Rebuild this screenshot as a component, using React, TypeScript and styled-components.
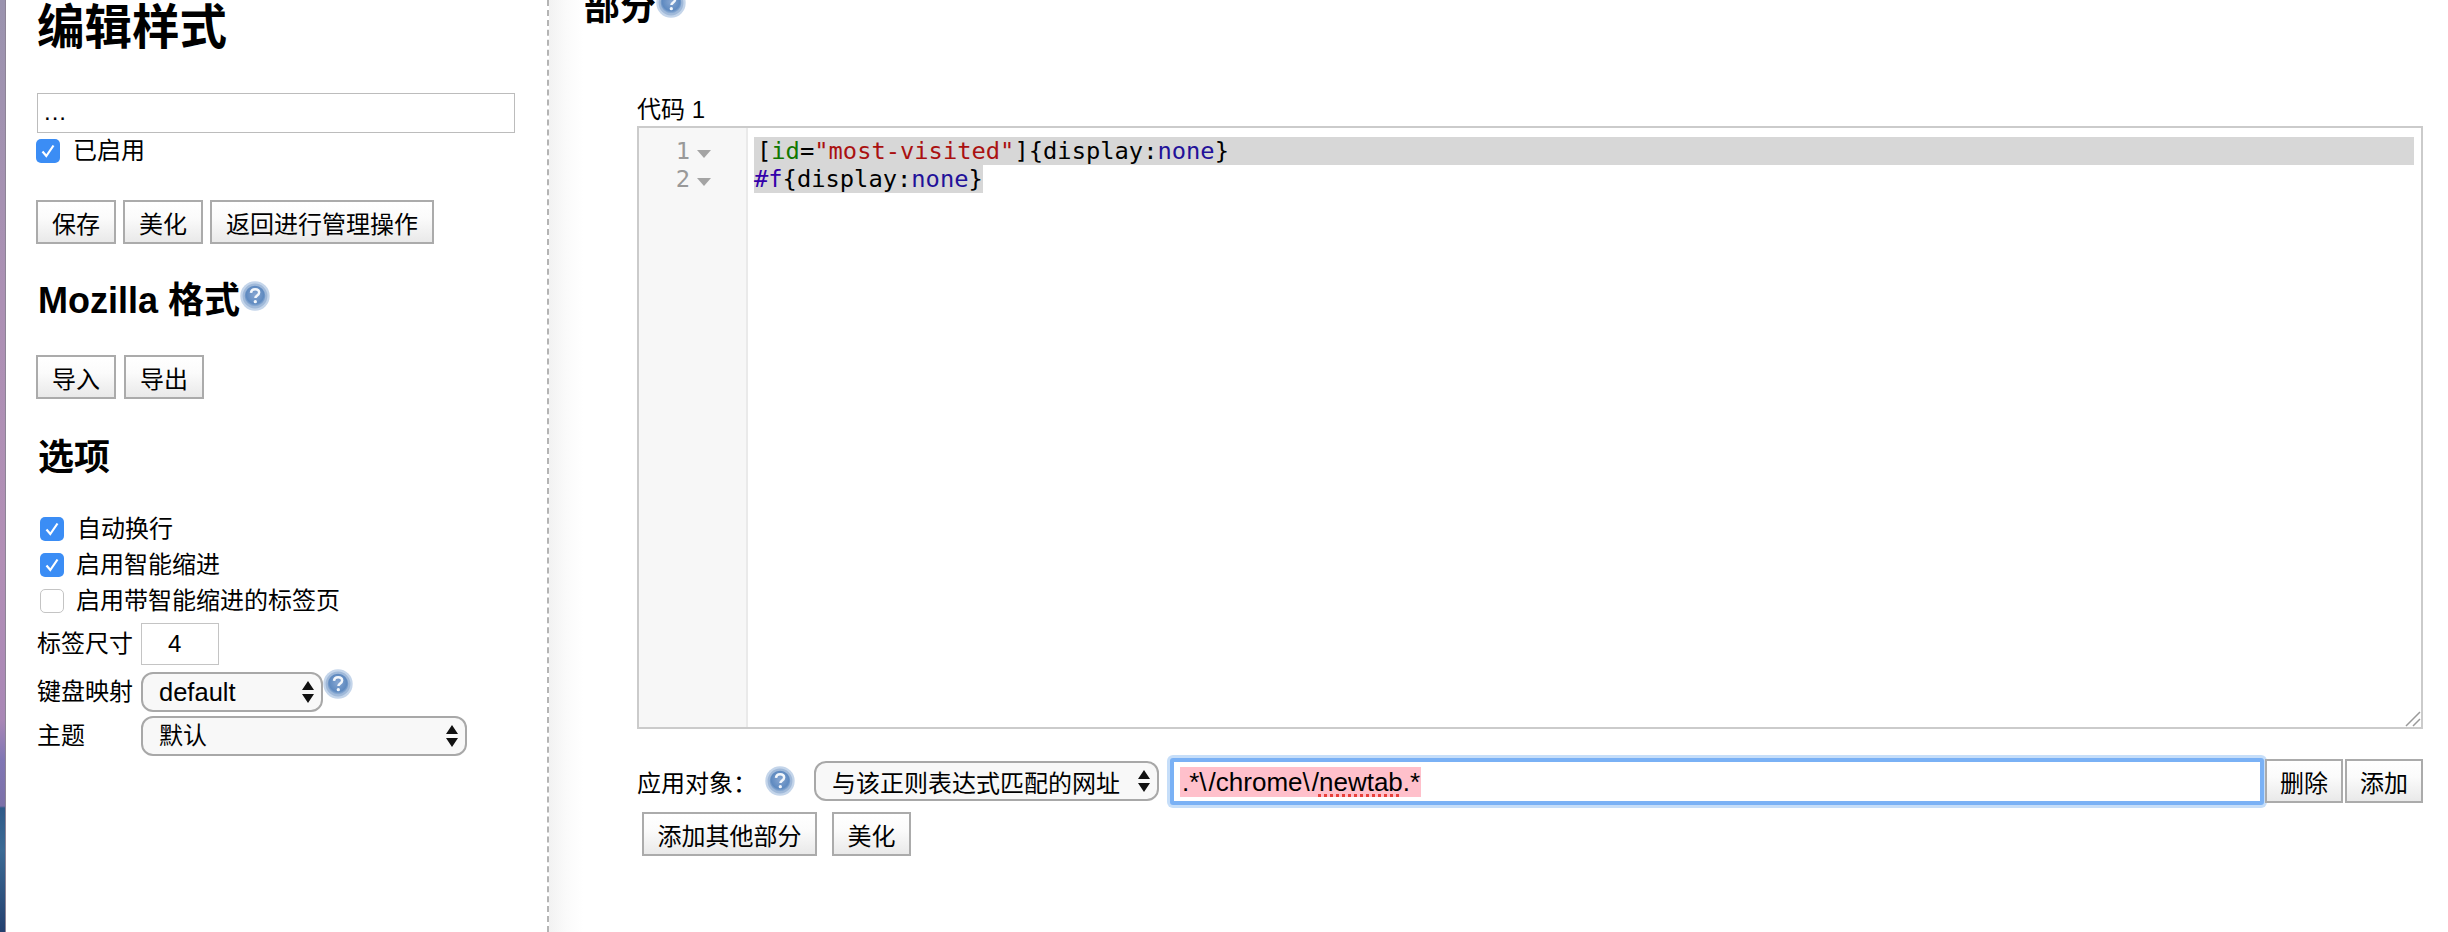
import * as React from "react";
import styled, { createGlobalStyle } from "styled-components";

const SANS = `"Liberation Sans", "Noto Sans CJK SC", sans-serif`;
const MONO = `"DejaVu Sans Mono", "Liberation Mono", monospace`;

const Global = createGlobalStyle`
    html, body {
        margin: 0;
        padding: 0;
        height: 932px;
        overflow: hidden;
        background: #fff;
    }
    body {
        font-family: ${SANS};
        font-size: 24px;
        color: #000;
    }
`;

const Page = styled.div`
    display: flex;
    width: 2448px;
    height: 932px;
    overflow: hidden;
`;

/* the desktop wallpaper showing through on the left edge */
const Wallpaper = styled.div`
    flex: none;
    width: 5px;
    border-right: 1px solid #8d8496;
    background:
        linear-gradient(180deg, #9a93ae 0, #ac90b4 300px, #b28fb6 560px, #a987b6 720px, #8076b4 760px, #7c70a8 806px, #2f5a88 808px, #3b6a94 850px, #24406f 932px);
`;

const Sidebar = styled.aside`
    flex: none;
    box-sizing: border-box;
    width: 543px;
    height: 932px;
    padding: 0 0 0 30px;
    border-right: 2px dashed #b4b4b4;
    display: flex;
    flex-direction: column;
    align-items: flex-start;
`;

const Main = styled.main`
    flex: 1;
    min-width: 0;
    box-sizing: border-box;
    padding: 0 25px 0 35px;
    background: linear-gradient(90deg, #f2f2f2 0, #fafafa 16px, #fff 34px);
    display: flex;
    flex-direction: column;
    align-items: flex-start;
`;

const Title = styled.h1`
    margin: 3px 0 0 1px;
    font-size: 47.5px;
    line-height: 50px;
    font-weight: bold;
`;

const SubTitle = styled.h2<{ $top: number }>`
    margin: ${(p) => p.$top}px 0 0 2px;
    font-size: 36px;
    line-height: 40px;
    font-weight: bold;
    display: flex;
    align-items: flex-start;
`;

const SectionTitle = styled(SubTitle)`
    margin-left: 0;
`;

const NameInput = styled.div`
    box-sizing: border-box;
    width: 478px;
    height: 40px;
    margin: 40px 0 0 1px;
    padding: 0 6px;
    border: 1px solid #bcbcbc;
    font-size: 24px;
    line-height: 36px;
    letter-spacing: 1px;
`;

const CheckRow = styled.label<{ $left: number; $gap: number; $top: number }>`
    display: flex;
    align-items: center;
    height: 24px;
    margin: ${(p) => p.$top}px 0 0 ${(p) => p.$left}px;
    gap: ${(p) => p.$gap}px;
    line-height: 24px;
`;

const CheckBox = styled.span<{ $on: boolean }>`
    flex: none;
    box-sizing: border-box;
    width: 24px;
    height: 24px;
    border-radius: 5px;
    display: flex;
    align-items: center;
    justify-content: center;
    background: ${(p) => (p.$on ? "#3b8df5" : "#fff")};
    border: ${(p) => (p.$on ? "none" : "1.5px solid #c4c4c4")};
`;

const ButtonRow = styled.div<{ $top: number; $left: number; $gap: number }>`
    display: flex;
    gap: ${(p) => p.$gap}px;
    margin: ${(p) => p.$top}px 0 0 ${(p) => p.$left}px;
`;

const Button = styled.button<{ $w: number }>`
    box-sizing: border-box;
    width: ${(p) => p.$w}px;
    height: 44px;
    padding: 0;
    border: 2px solid #ababab;
    border-radius: 0;
    background: linear-gradient(180deg, #fff 0, #fbfbfb 40%, #e9e9e9 100%);
    font-family: ${SANS};
    font-size: 24px;
    color: #000;
`;

const OptionList = styled.div`
    display: flex;
    flex-direction: column;
    gap: 12px;
    margin-top: 39px;
`;

const FormRow = styled.div<{ $top: number }>`
    display: flex;
    align-items: center;
    margin: ${(p) => p.$top}px 0 0 1px;
    line-height: 28px;
`;

const RowLabel = styled.span`
    flex: none;
    width: 104px;
`;

const NumberBox = styled.div`
    box-sizing: border-box;
    width: 78px;
    height: 42px;
    border: 1px solid #c4c4c4;
    padding-left: 26px;
    line-height: 40px;
`;

const Select = styled.div<{ $w: number; $h: number; $pad: number }>`
    flex: none;
    box-sizing: border-box;
    width: ${(p) => p.$w}px;
    height: ${(p) => p.$h}px;
    padding: 0 6px 0 ${(p) => p.$pad}px;
    border: 2px solid #a8a8a8;
    border-radius: 12px;
    background: #f8f8f8;
    display: flex;
    align-items: center;
    justify-content: space-between;
    white-space: nowrap;
`;

const LatinValue = styled.span`
    font-size: 25.5px;
`;

const CodeLabel = styled.div`
    margin: 68px 0 0 53px;
    line-height: 28px;
`;

const Editor = styled.div`
    box-sizing: border-box;
    position: relative;
    width: 1786px;
    height: 603px;
    margin: 2px 0 0 53px;
    border: 2px solid #cbcbcb;
    display: flex;
`;

const Gutter = styled.div`
    flex: none;
    box-sizing: border-box;
    width: 109px;
    padding-top: 9px;
    background: #f7f7f7;
    border-right: 2px solid #eaeaea;
`;

const GutterLine = styled.div`
    height: 28px;
    display: flex;
    align-items: center;
    justify-content: flex-end;
    gap: 7px;
    padding-right: 35px;
    font-family: ${MONO};
    font-size: 23.75px;
    color: #999;
`;

const Fold = styled.span`
    width: 0;
    height: 0;
    margin-top: 5px;
    border-left: 7px solid transparent;
    border-right: 7px solid transparent;
    border-top: 8px solid #a4a4a4;
`;

const Code = styled.div`
    flex: 1;
    min-width: 0;
    box-sizing: border-box;
    padding: 9px 7px 0 6px;
    font-family: ${MONO};
    font-size: 23.75px;
    line-height: 28px;
`;

const CodeLine = styled.div<{ $full?: boolean }>`
    height: 28px;
    white-space: pre;
    background: #d7d7d7;
    width: ${(p) => (p.$full ? "auto" : "fit-content")};
    padding-left: ${(p) => (p.$full ? 3 : 0)}px;
`;

const Token = styled.span<{ $c: string }>`
    color: ${(p) => p.$c};
`;

const Grip = styled.svg`
    position: absolute;
    right: 0;
    bottom: 0;
`;

const ApplyRow = styled.div`
    display: flex;
    align-items: center;
    width: 1786px;
    height: 54px;
    margin: 25px 0 0 53px;
`;

const ApplyLabel = styled.span`
    flex: none;
    width: 128px;
    white-space: nowrap;
`;

const HelpSlot = styled.span`
    flex: none;
    width: 49px;
    display: flex;
`;

const UrlInput = styled.div`
    flex: none;
    box-sizing: border-box;
    width: 1094px;
    height: 47px;
    margin: 0 1px 0 11px;
    padding: 5px 0 0 6px;
    border: 4px solid #7ab1f5;
    border-radius: 3px;
    box-shadow: 0 0 0 3px #c6def9;
    background: #fff;
    font-size: 26px;
    line-height: 30px;
    font-kerning: none;
    white-space: nowrap;
`;

const Pink = styled.span`
    display: inline-block;
    height: 30px;
    padding: 0 1px 0 2px;
    background: #ffc0cb;
`;

const Backslash = styled.span`
    letter-spacing: 2px;
`;

const Misspelt = styled.span`
    text-decoration: underline dotted #e8403a 3px;
    text-underline-offset: 3px;
`;

const SideButton = styled(Button)`
    margin-right: 2px;
    &:last-child {
        margin-right: 0;
    }
`;

const HelpMark = styled.svg<{ $top?: number }>`
    flex: none;
    margin-top: ${(p) => p.$top ?? 0}px;
`;

let helpCount = 0;

function Help({ top }: { top?: number }) {
    const id = React.useMemo(() => "help-" + helpCount++, []);
    return (
        <HelpMark $top={top} width="30" height="30" viewBox="0 0 29 29">
            <defs>
                <radialGradient id={id} cx="50%" cy="45%" r="55%">
                    <stop offset="0%" stopColor="#86a6d2" />
                    <stop offset="70%" stopColor="#5f8ac0" />
                    <stop offset="100%" stopColor="#a9c2e0" />
                </radialGradient>
            </defs>
            <circle cx="14.5" cy="14.5" r="14.2" fill="#c4d5ea" />
            <circle cx="14.5" cy="14.5" r="11" fill={`url(#${id})`} stroke="#a0b9d9" strokeWidth="2" />
            <path d="M10.6 11.4c.2-2.3 1.8-3.5 4-3.5 2.300 0 3.900 1.300 3.900 3.200 0 2.800-3.600 2.900-3.600 5.400" fill="none" stroke="#f2f6fb" strokeWidth="2.400" />
            <circle cx="14.800" cy="20" r="1.600" fill="#f2f6fb" />
        </HelpMark>
    );
}

function Arrows() {
    return (
        <svg width="14" height="24" viewBox="0 0 14 24">
            <path d="M7 1 L13 10 H1 Z M7 23 L13 14 H1 Z" fill="#111" />
        </svg>
    );
}

function Tick({ on }: { on: boolean }) {
    return (
        <CheckBox $on={on}>
            {on && (
                <svg width="16" height="16" viewBox="0 0 16 16">
                    <path d="M2.500 8.500 L6.300 13 L13.500 2.500" fill="none" stroke="#fff" strokeWidth="2.200" />
                </svg>
            )}
        </CheckBox>
    );
}

export default function App() {
    return (
        <Page>
            <Global />
            <Wallpaper />
            <Sidebar>
                <Title>编辑样式</Title>
                <NameInput>...</NameInput>
                <CheckRow $left={0} $gap={13} $top={6}>
                    <Tick on />
                    已启用
                </CheckRow>
                <ButtonRow $top={37} $left={0} $gap={7}>
                    <Button $w={80}>保存</Button>
                    <Button $w={80}>美化</Button>
                    <Button $w={224}>返回进行管理操作</Button>
                </ButtonRow>
                <SubTitle $top={37}>
                    Mozilla 格式
                    <Help />
                </SubTitle>
                <ButtonRow $top={34} $left={0} $gap={8}>
                    <Button $w={80}>导入</Button>
                    <Button $w={80}>导出</Button>
                </ButtonRow>
                <SubTitle $top={39}>选项</SubTitle>
                <OptionList>
                    <CheckRow $left={4} $gap={13} $top={0}>
                        <Tick on />
                        自动换行
                    </CheckRow>
                    <CheckRow $left={4} $gap={12} $top={0}>
                        <Tick on />
                        启用智能缩进
                    </CheckRow>
                    <CheckRow $left={4} $gap={12} $top={0}>
                        <Tick on={false} />
                        启用带智能缩进的标签页
                    </CheckRow>
                </OptionList>
                <FormRow $top={10}>
                    <RowLabel>标签尺寸</RowLabel>
                    <NumberBox>4</NumberBox>
                </FormRow>
                <FormRow $top={7}>
                    <RowLabel>键盘映射</RowLabel>
                    <Select $w={182} $h={40} $pad={16}>
                        <LatinValue>default</LatinValue>
                        <Arrows />
                    </Select>
                    <Help top={-16} />
                </FormRow>
                <FormRow $top={4}>
                    <RowLabel>主题</RowLabel>
                    <Select $w={326} $h={40} $pad={16}>
                        默认
                        <Arrows />
                    </Select>
                </FormRow>
            </Sidebar>
            <Main>
                <SectionTitle $top={-12}>
                    部分
                    <Help />
                </SectionTitle>
                <CodeLabel>代码 1</CodeLabel>
                <Editor>
                    <Gutter>
                        <GutterLine>1<Fold /></GutterLine>
                        <GutterLine>2<Fold /></GutterLine>
                    </Gutter>
                    <Code>
                        <CodeLine $full>
                            [<Token $c="#117700">id</Token>=<Token $c="#aa1111">"most-visited"</Token>]{"{"}display:<Token $c="#221199">none</Token>{"}"}
                        </CodeLine>
                        <CodeLine>
                            <Token $c="#3300aa">#f</Token>{"{"}display:<Token $c="#221199">none</Token>{"}"}
                        </CodeLine>
                    </Code>
                    <Grip width="16" height="16" viewBox="0 0 16 16">
                        <path d="M1 15 L15 1 M8 15 L15 8" stroke="#9a9a9a" strokeWidth="1.500" fill="none" />
                    </Grip>
                </Editor>
                <ApplyRow>
                    <ApplyLabel>应用对象：</ApplyLabel>
                    <HelpSlot><Help /></HelpSlot>
                    <Select $w={345} $h={40} $pad={16}>
                        与该正则表达式匹配的网址
                        <Arrows />
                    </Select>
                    <UrlInput>
                        <Pink>.*<Backslash>\</Backslash>/chrome<Backslash>\</Backslash>/<Misspelt>newtab</Misspelt>.*</Pink>
                    </UrlInput>
                    <SideButton $w={78}>删除</SideButton>
                    <SideButton $w={78}>添加</SideButton>
                </ApplyRow>
                <ButtonRow $top={4} $left={58} $gap={15}>
                    <Button $w={175}>添加其他部分</Button>
                    <Button $w={79}>美化</Button>
                </ButtonRow>
            </Main>
        </Page>
    );
}
